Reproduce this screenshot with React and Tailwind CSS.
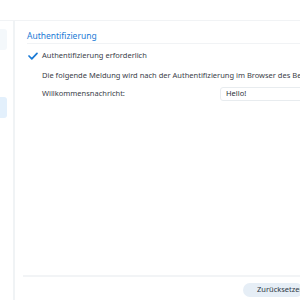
import React from 'react';

function Check() {
    return (
        <svg width="10" height="8" viewBox="0 0 10 8" className="shrink-0">
            <path d="M1 4 L3.8 6.8 L9 1.3" fill="none" stroke="#1a7ad6" strokeWidth="1.7" strokeLinecap="round" strokeLinejoin="round" />
        </svg>
    );
}

export default function App() {
    return (
        <div className="w-[300px] h-[300px] bg-white overflow-hidden flex flex-col text-[#3a4048]" style={{ fontFamily: '"Noto Sans", "Open Sans", sans-serif' }}>
            <div className="h-[21px] shrink-0 border-b border-[#f1f3f5]" />
            <div className="flex flex-1 min-h-0">
                {/* sidebar */}
                <div className="w-[15px] shrink-0 border-r-2 border-[#f0f3f5] flex flex-col">
                    <div className="h-[8px]" />
                    <div className="w-[7px] h-[21px] bg-[#f4f8fb] rounded-r-[3px]" />
                    <div className="h-[47px]" />
                    <div className="w-[7px] h-[21px] bg-[#e3f0fc] rounded-r-[3px]" />
                </div>

                {/* main */}
                <div className="flex-1 flex flex-col min-w-0">
                    <div className="pl-[12px] pt-[8px]">
                        <div className="h-[15px] border-b border-[#f1f3f5] text-[8.5px] leading-[13px] text-[#1a7ad6] whitespace-nowrap">
                            Authentifizierung
                        </div>
                    </div>
                    <div className="pl-[13px] pt-[5px] flex flex-col text-[7.5px] whitespace-nowrap">
                        <div className="h-[14px] flex items-center gap-[4px]">
                            <Check />
                            <span>Authentifizierung erforderlich</span>
                        </div>
                        <div className="h-[14px] pl-[14px] mt-[6px] flex items-center">
                            Die folgende Meldung wird nach der Authentifizierung im Browser des Benutzers angezeigt.
                        </div>
                        <div className="pl-[14px] mt-[4px] flex items-center h-[14px]">
                            <span className="w-[178px] shrink-0">Willkommensnachricht:</span>
                            <div className="h-[14px] w-[100px] shrink-0 border border-[#e8ecef] rounded-[3px] pl-[5px] flex items-center text-[#2b3138]">
                                Hello!
                            </div>
                        </div>
                    </div>
                    <div className="flex-1" />
                    <div className="ml-[8px] h-[25px] border-t-2 border-[#f2f4f6] flex items-start justify-end pt-[6px]">
                        <div className="h-[14px] w-[60px] -mr-[3px] rounded-full bg-[#e6eef6] text-[7.5px] text-[#2f3a46] flex items-center pl-[14px] whitespace-nowrap">
                            Zurücksetzen
                        </div>
                    </div>
                </div>
            </div>
        </div>
    );
}
